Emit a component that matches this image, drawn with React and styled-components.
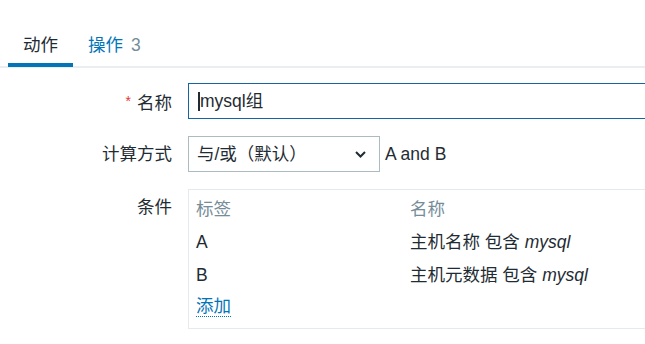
import React from 'react';
import styled, { createGlobalStyle } from 'styled-components';

const Global = createGlobalStyle`
  html, body {
    margin: 0;
    padding: 0;
    background: #fff;
    overflow: hidden;
  }
  body {
    font-family: "Liberation Sans", "Noto Sans CJK SC", sans-serif;
    font-size: 17.5px;
    color: #1f2c33;
  }
`;

const Page = styled.div`
  width: 645px;
  height: 344px;
  overflow: hidden;
`;

const TabList = styled.div`
  display: flex;
  padding-left: 8px;
  border-bottom: 2px solid #ebeef0;
`;

const Tab = styled.div`
  padding: 33px 15px 6px;
  line-height: 24px;
  margin-bottom: -1px;
  border-bottom: 4px solid ${p => (p.$active ? '#0275b8' : 'transparent')};
  color: ${p => (p.$active ? '#1f2c33' : '#0275b8')};
  cursor: pointer;
`;

const Count = styled.span`
  color: #768d99;
  margin-left: 8px;
`;

const Form = styled.div`
  display: grid;
  grid-template-columns: 172px 1fr;
  column-gap: 16px;
  row-gap: 17px;
  padding-top: 15px;
`;

const Label = styled.div`
  text-align: right;
  line-height: 36px;
  height: 36px;
  white-space: nowrap;
`;

const Required = styled.span`
  color: #e33734;
  margin-right: 6px;
  font-size: 14px;
  vertical-align: 3px;
`;

const Field = styled.div`
  display: flex;
  align-items: center;
  min-width: 0;
`;

const TextInput = styled.div`
  box-sizing: border-box;
  width: 600px;
  flex-shrink: 0;
  height: 36px;
  border: 1px solid #1565a0;
  padding-left: 9px;
  display: flex;
  align-items: center;
  line-height: 20px;
`;

const Caret = styled.span`
  display: inline-block;
  width: 2px;
  height: 19px;
  background: #1f2c33;
`;

const Select = styled.div`
  box-sizing: border-box;
  width: 192px;
  height: 36px;
  border: 1px solid #acbbc2;
  padding: 0 13px 0 8px;
  display: flex;
  align-items: center;
  justify-content: space-between;
  line-height: 20px;
`;

const Hint = styled.span`
  margin-left: 5px;
  white-space: nowrap;
`;

const CondBox = styled.div`
  box-sizing: border-box;
  width: 600px;
  flex-shrink: 0;
  border: 1px solid #e6eaec;
  padding: 2px 7px 4px;
`;

const CondRow = styled.div`
  display: grid;
  grid-template-columns: 214px 1fr;
  height: 33px;
  align-items: center;
  line-height: 20px;
  color: ${p => (p.$head ? '#768d99' : '#1f2c33')};
  white-space: nowrap;
`;

const AddLink = styled.span`
  color: #0275b8;
  border-bottom: 1px dotted #0275b8;
  line-height: 20px;
  justify-self: start;
  margin-top: -2px;
  cursor: pointer;
`;

const Chevron = () => (
  <svg width="11" height="7" viewBox="0 0 11 7">
    <path d="M1 1l4.5 4.5L10 1" fill="none" stroke="#1f2c33" strokeWidth="2" />
  </svg>
);

const conditions = [
  { label: 'A', name: '主机名称 包含 ', value: 'mysql' },
  { label: 'B', name: '主机元数据 包含 ', value: 'mysql' },
];

export default function App() {
  return (
    <Page>
      <Global />
      <TabList>
        <Tab $active>动作</Tab>
        <Tab>
          操作<Count>3</Count>
        </Tab>
      </TabList>
      <Form>
        <Label>
          <Required>*</Required>名称
        </Label>
        <Field>
          <TextInput>
            <Caret />
            mysql组
          </TextInput>
        </Field>

        <Label>计算方式</Label>
        <Field>
          <Select>
            <span>与/或（默认）</span>
            <Chevron />
          </Select>
          <Hint>A and B</Hint>
        </Field>

        <Label>条件</Label>
        <Field>
          <CondBox>
            <CondRow $head>
              <span>标签</span>
              <span>名称</span>
            </CondRow>
            {conditions.map(c => (
              <CondRow key={c.label}>
                <span>{c.label}</span>
                <span>
                  {c.name}
                  <i>{c.value}</i>
                </span>
              </CondRow>
            ))}
            <CondRow>
              <AddLink>添加</AddLink>
            </CondRow>
          </CondBox>
        </Field>
      </Form>
    </Page>
  );
}
